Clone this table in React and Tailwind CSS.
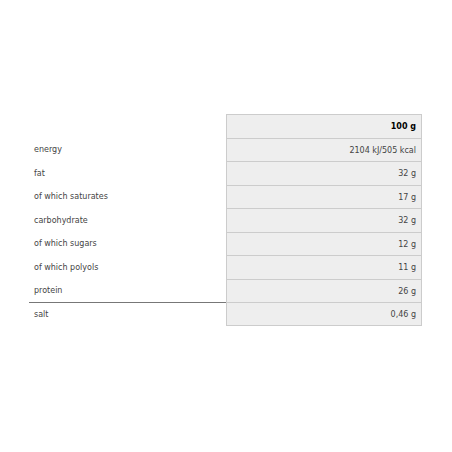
export default function App() {
  const rows = [
    ["energy", "2104 kJ/505 kcal"],
    ["fat", "32 g"],
    ["of which saturates", "17 g"],
    ["carbohydrate", "32 g"],
    ["of which sugars", "12 g"],
    ["of which polyols", "11 g"],
    ["protein", "26 g"],
    ["salt", "0,46 g"],
  ];
  return (
    <div className="w-[452px] h-[452px] bg-white pt-[114px] pl-[29px]" style={{ fontFamily: '"DejaVu Sans", sans-serif' }}>
      <div className="w-[393px] flex flex-col">
        <div className="flex h-[24px]">
          <div className="w-[197px]"></div>
          <div className="w-[196px] bg-[#eeeeee] border-t border-l border-r border-[#cccccc] flex items-center justify-end pr-[5px] pt-[1px] text-[8px] font-bold text-black">100 g</div>
        </div>
        {rows.map(([k, v], i) => (
          <div key={k} className={`flex ${i % 2 === 0 ? "h-[23px]" : "h-[24px]"}`}>
            <div className={`w-[197px] flex items-center pl-[5px] pt-[1px] text-[8px] text-[#444444] ${k === "salt" ? "border-t border-[#777777]" : ""}`}>{k}</div>
            <div className={`w-[196px] bg-[#eeeeee] border-t border-l border-r border-[#cccccc] ${i === rows.length - 1 ? "border-b" : ""} flex items-center justify-end pr-[5px] pt-[1px] text-[8px] text-[#444444]`}>{v}</div>
          </div>
        ))}
      </div>
    </div>
  );
}
